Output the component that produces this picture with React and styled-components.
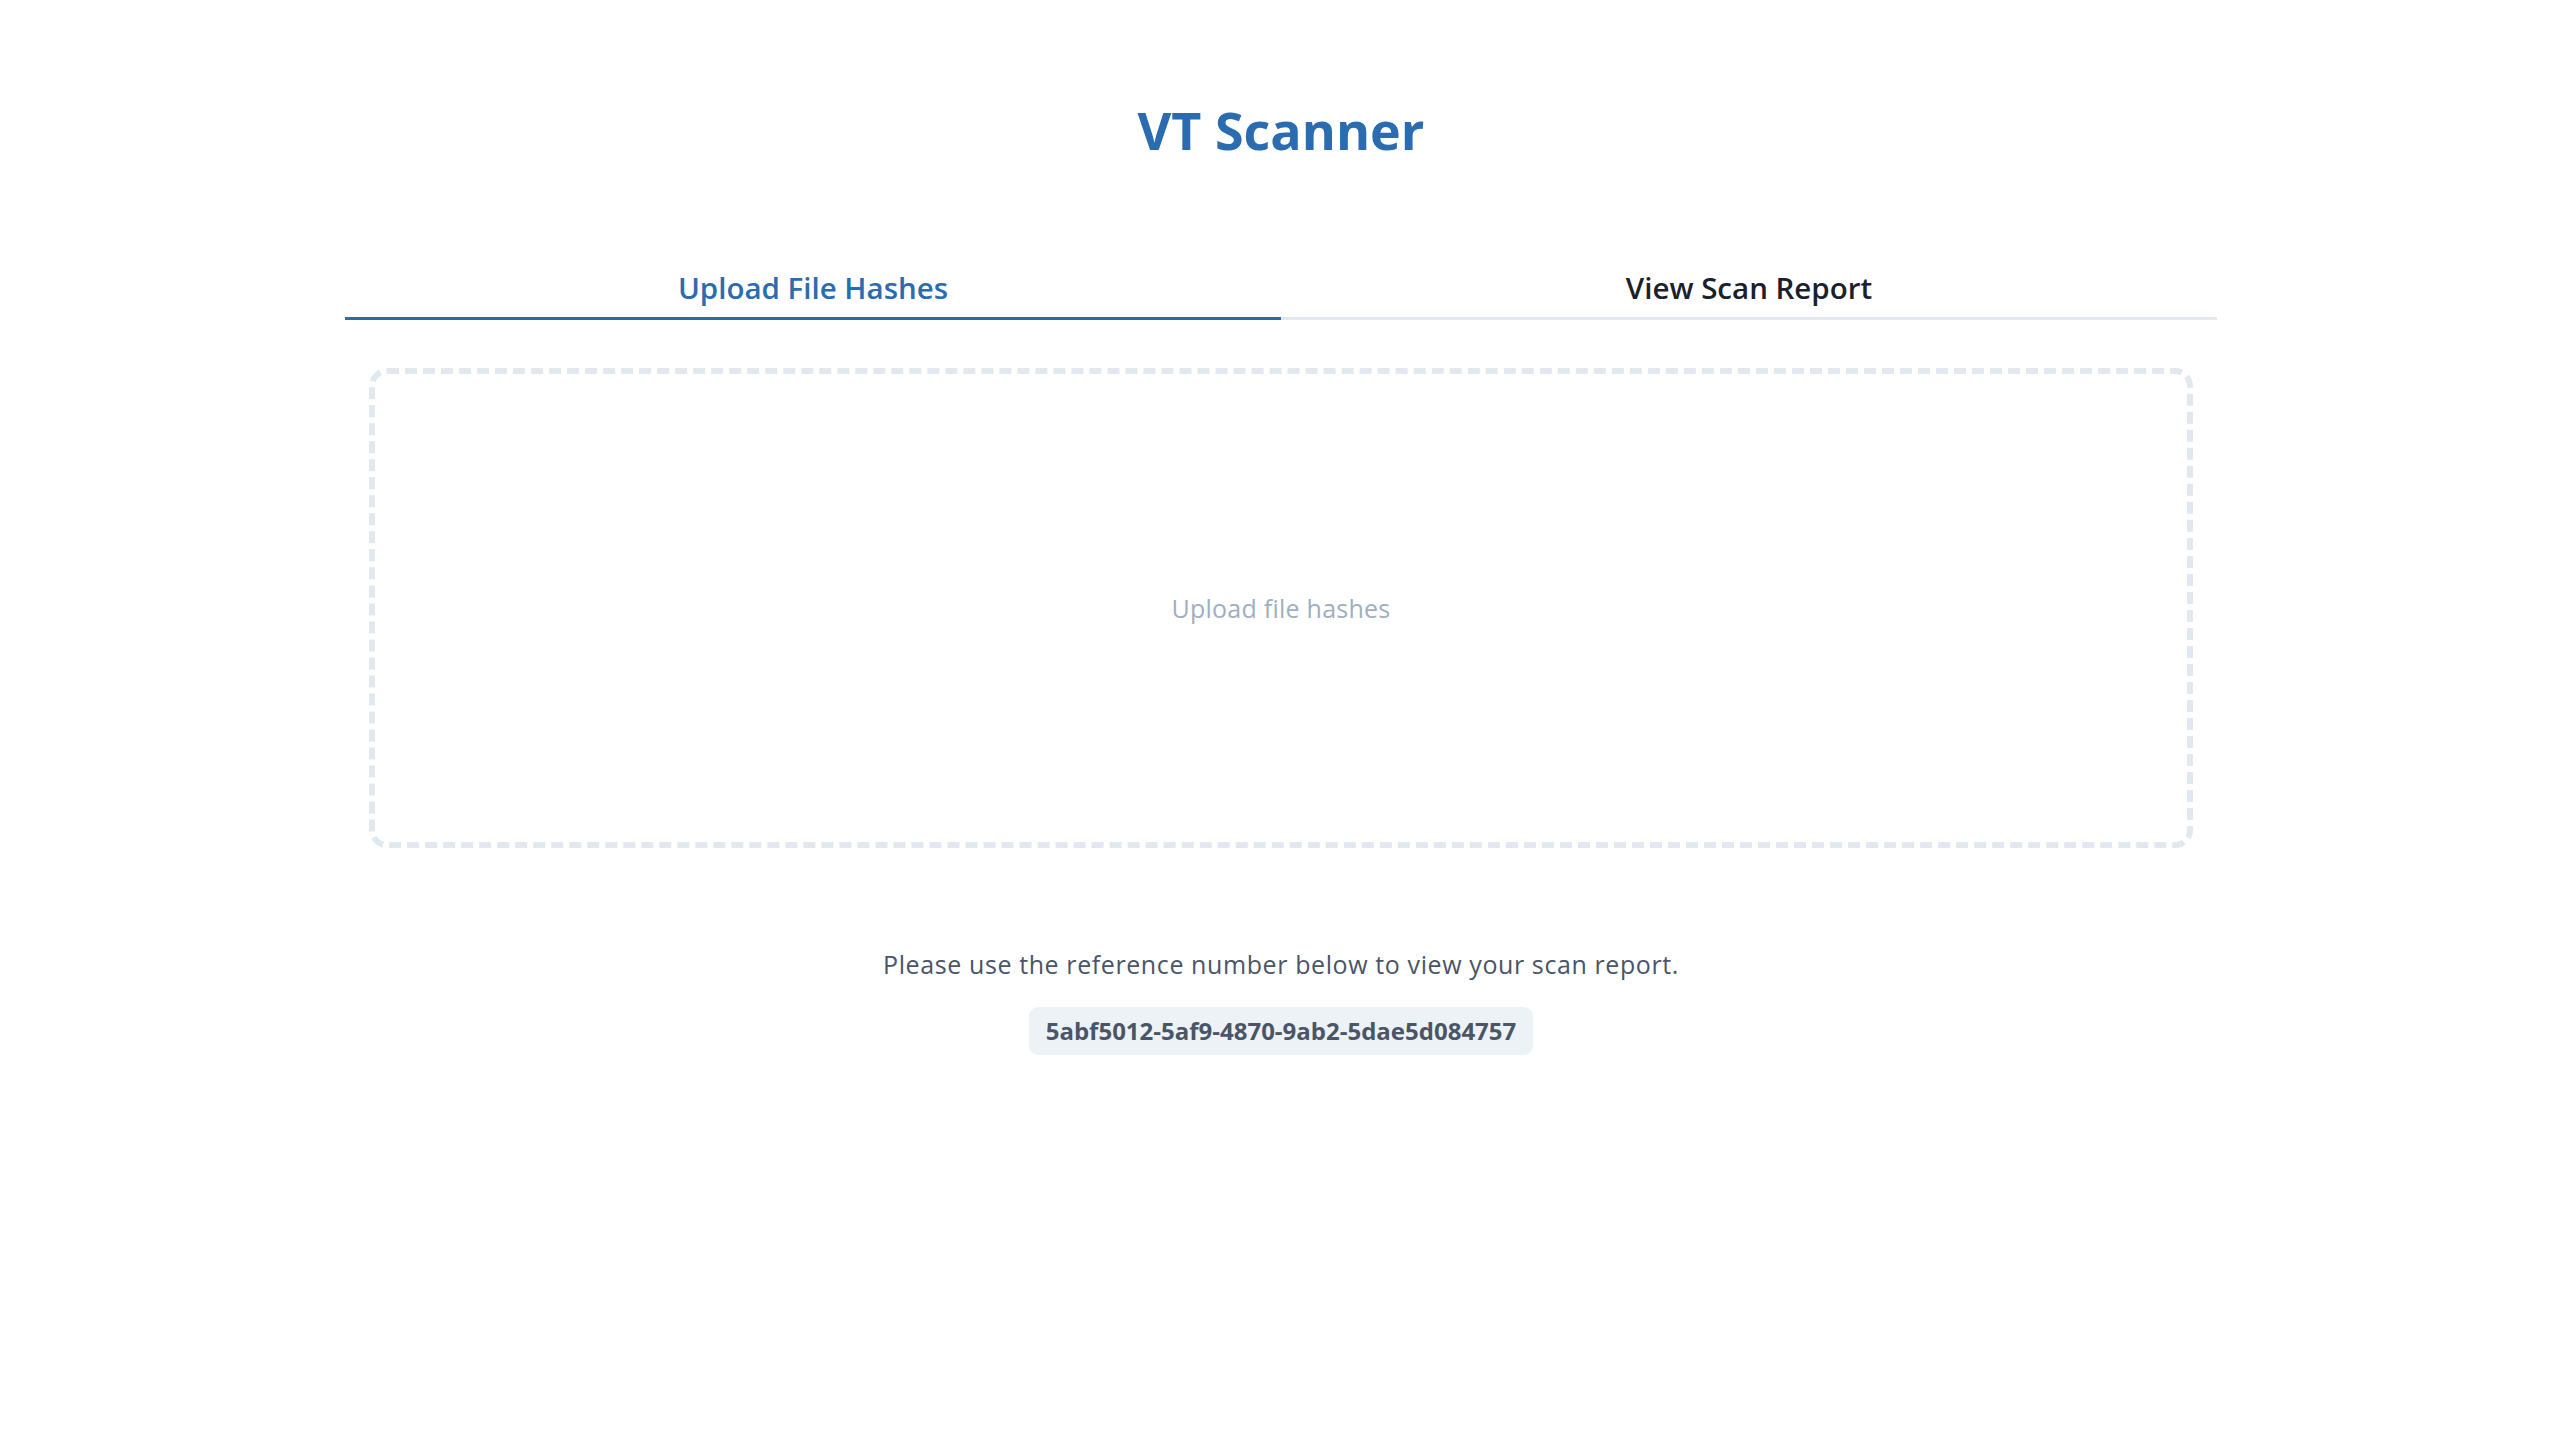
import React, { useState } from "react";
import styled, { createGlobalStyle } from "styled-components";

const GlobalStyle = createGlobalStyle`
  html, body {
    margin: 0;
    padding: 0;
    background: #fff;
  }
  body {
    font-family: "Open Sans", "Noto Sans", sans-serif;
    color: #1a202c;
  }
  * {
    box-sizing: border-box;
  }
`;

const Page = styled.main`
  display: flex;
  flex-direction: column;
  align-items: center;
  padding-top: 103px;
  padding-left: 2px;
  min-height: 100vh;
`;

const Title = styled.h1`
  margin: 0;
  font-size: 52px;
  line-height: 54px;
  font-weight: 700;
  color: #2b6cb0;
`;

const Container = styled.section`
  width: 1872px;
  margin-top: 108px;
  display: flex;
  flex-direction: column;
  align-items: center;
`;

const TabList = styled.div`
  width: 100%;
  display: grid;
  grid-template-columns: 1fr 1fr;
`;

const Tab = styled.button`
  appearance: none;
  background: none;
  border: 0;
  border-bottom: 3px solid ${(p) => (p.$active ? "#2b6cb0" : "#e2e8f0")};
  padding: 0 0 7px;
  margin: 0;
  font-family: inherit;
  font-size: 29.5px;
  line-height: 45px;
  font-weight: 600;
  color: ${(p) => (p.$active ? "#2b6cb0" : "#1a202c")};
  cursor: pointer;
`;

const Panel = styled.div`
  width: 100%;
  padding: 0 24px;
  margin-top: 48px;
`;

const DropZone = styled.label`
  height: 480px;
  border: 6px dashed #e2e8f0;
  border-radius: 18px;
  display: flex;
  align-items: center;
  justify-content: center;
  font-size: 25px;
  letter-spacing: 0.25px;
  line-height: 36px;
  color: #a0aec0;
  cursor: pointer;
`;

const Notice = styled.p`
  margin: 98px 0 0;
  font-size: 25px;
  letter-spacing: 0.6px;
  line-height: 36px;
  color: #4a5568;
`;

const Reference = styled.code`
  margin-top: 25px;
  padding: 6px 17px;
  background: #edf2f7;
  border-radius: 9px;
  font-family: inherit;
  font-size: 24px;
  line-height: 36px;
  font-weight: 700;
  color: #4a5568;
`;

function App() {
  const [tab, setTab] = useState("upload");
  return (
    <>
      <GlobalStyle />
      <Page>
        <Title>VT Scanner</Title>
        <Container>
          <TabList>
            <Tab $active={tab === "upload"} onClick={() => setTab("upload")}>
              Upload File Hashes
            </Tab>
            <Tab $active={tab === "report"} onClick={() => setTab("report")}>
              View Scan Report
            </Tab>
          </TabList>
          <Panel>
            <DropZone>Upload file hashes</DropZone>
          </Panel>
          <Notice>
            Please use the reference number below to view your scan report.
          </Notice>
          <Reference>5abf5012-5af9-4870-9ab2-5dae5d084757</Reference>
        </Container>
      </Page>
    </>
  );
}

export default App;
